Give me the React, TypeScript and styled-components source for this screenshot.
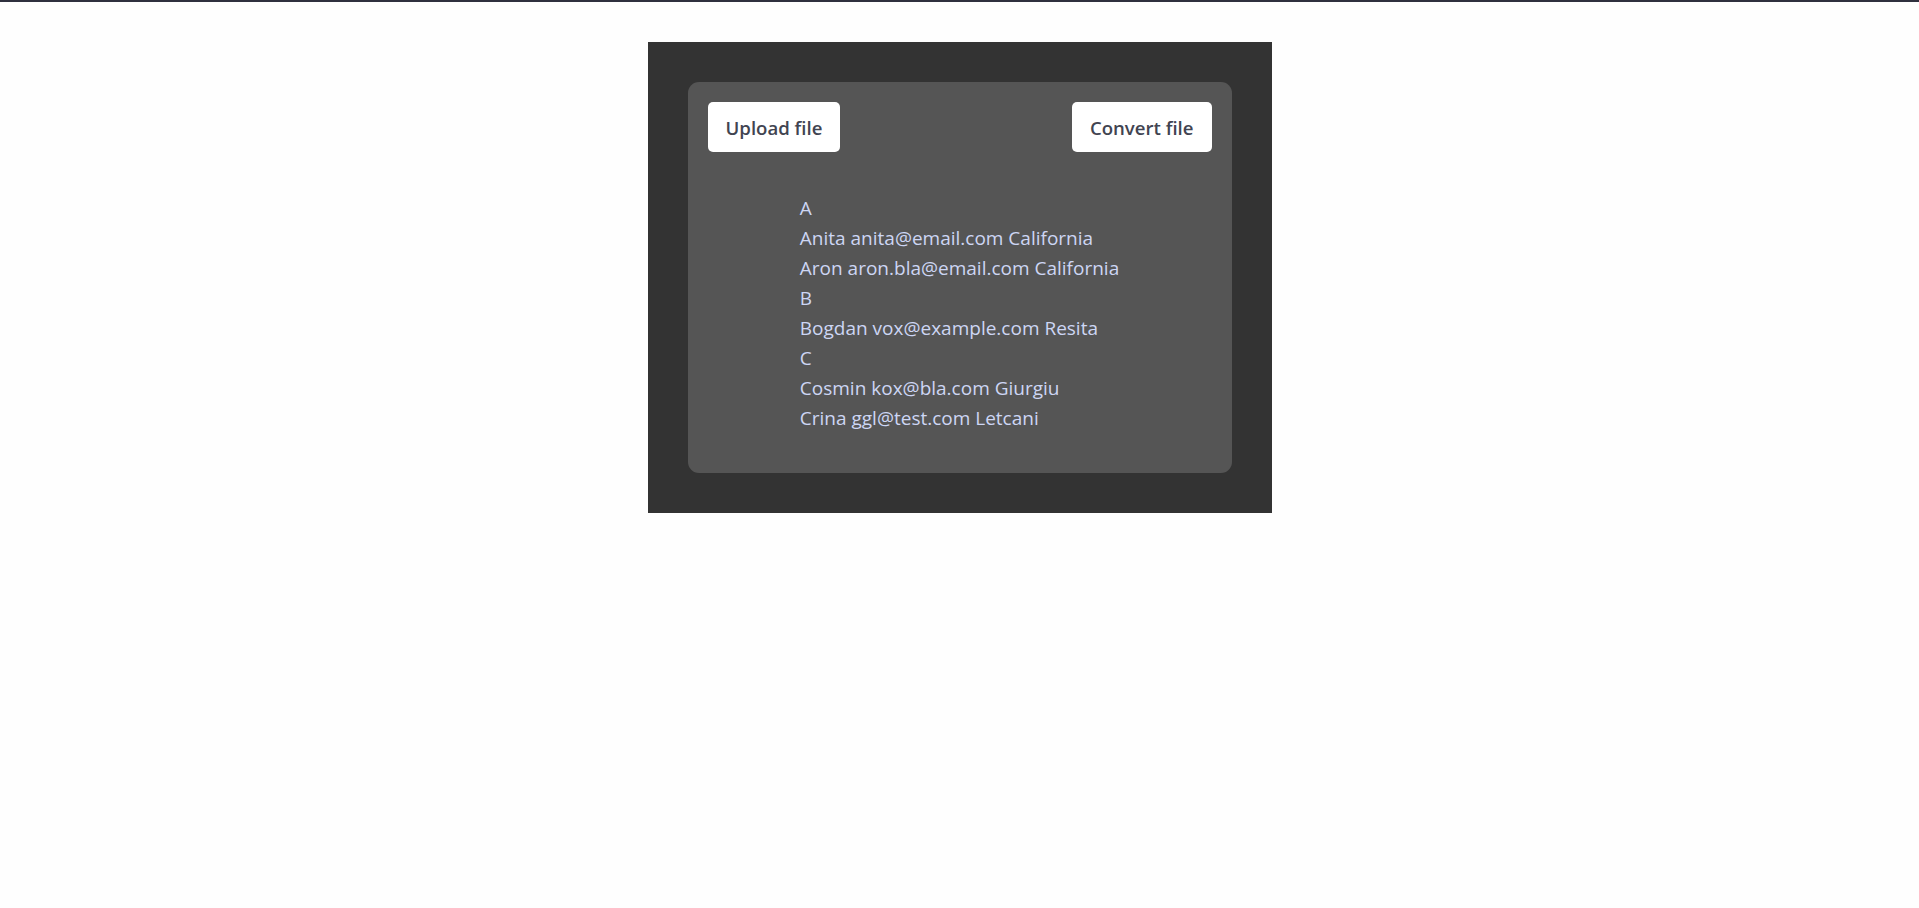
import React from "react";
import styled, { createGlobalStyle } from "styled-components";

const GlobalStyle = createGlobalStyle`
  html, body {
    margin: 0;
    padding: 0;
    background: #fefefe;
  }
  body {
    font-family: "Open Sans", "Noto Sans", sans-serif;
  }
`;

const TopBar = styled.div`
  height: 2px;
  background: #2f303e;
`;

const Page = styled.main`
  display: flex;
  justify-content: center;
  padding-top: 40px;
`;

const Frame = styled.section`
  width: 544px;
  padding: 40px;
  background: #333333;
`;

const Card = styled.div`
  background: #555555;
  border-radius: 11px;
  padding: 20px 20px 40px;
  display: flex;
  flex-direction: column;
  align-items: center;
  gap: 41px;
`;

const Toolbar = styled.div`
  align-self: stretch;
  display: flex;
  justify-content: space-between;
`;

const Button = styled.button`
  height: 50px;
  padding: 0 18px;
  border: none;
  border-radius: 5px;
  background: #ffffff;
  color: #414451;
  font-family: "Open Sans", "Noto Sans", sans-serif;
  font-size: 18.6px;
  font-weight: 600;
  cursor: pointer;
`;

const List = styled.div`
  display: flex;
  flex-direction: column;
  text-align: left;
`;

const Line = styled.div`
  height: 30px;
  line-height: 30px;
  font-size: 19px;
  color: #cdd6f4;
  white-space: nowrap;
`;

const data: { letter: string; people: string[] }[] = [
  {
    letter: "A",
    people: [
      "Anita anita@email.com California",
      "Aron aron.bla@email.com California",
    ],
  },
  { letter: "B", people: ["Bogdan vox@example.com Resita"] },
  {
    letter: "C",
    people: ["Cosmin kox@bla.com Giurgiu", "Crina ggl@test.com Letcani"],
  },
];

export default function App() {
  return (
    <>
      <GlobalStyle />
      <TopBar />
      <Page>
        <Frame>
          <Card>
            <Toolbar>
              <Button>Upload file</Button>
              <Button>Convert file</Button>
            </Toolbar>
            <List>
              {data.map((g) => (
                <React.Fragment key={g.letter}>
                  <Line>{g.letter}</Line>
                  {g.people.map((p) => (
                    <Line key={p}>{p}</Line>
                  ))}
                </React.Fragment>
              ))}
            </List>
          </Card>
        </Frame>
      </Page>
    </>
  );
}
